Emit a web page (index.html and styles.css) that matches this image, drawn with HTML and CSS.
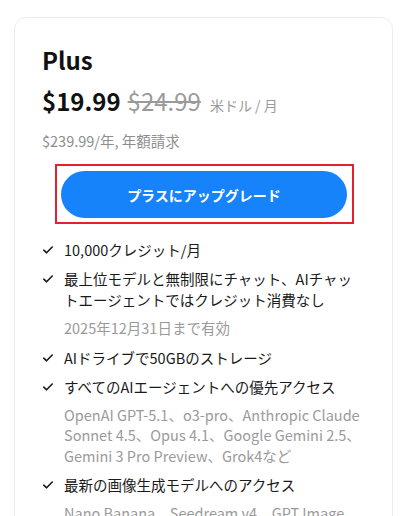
FILE: index.html
```html
<!DOCTYPE html>
<html lang="ja">
<head>
<meta charset="utf-8">
<title>Plus</title>
<link rel="stylesheet" href="styles.css">
</head>
<body>
<div class="card">
  <h2 class="plan">Plus</h2>
  <div class="price-row">
    <span class="price">$19.99</span>
    <span class="old-price">$24.99</span>
    <span class="unit">米ドル / 月</span>
  </div>
  <p class="annual">$239.99/年, 年額請求</p>
  <div class="btn-frame">
    <button class="btn">プラスにアップグレード</button>
  </div>
  <ul class="features">
    <li class="item"><svg class="check" viewBox="0 0 10 8"><path d="M0.8 4.2 L3.6 6.8 L9.2 1"/></svg><span>10,000クレジット/月</span></li>
    <li class="item"><svg class="check" viewBox="0 0 10 8"><path d="M0.8 4.2 L3.6 6.8 L9.2 1"/></svg><span>最上位モデルと無制限にチャット、AIチャットエージェントではクレジット消費なし</span></li>
    <li class="note">2025年12月31日まで有効</li>
    <li class="item"><svg class="check" viewBox="0 0 10 8"><path d="M0.8 4.2 L3.6 6.8 L9.2 1"/></svg><span>AIドライブで50GBのストレージ</span></li>
    <li class="item"><svg class="check" viewBox="0 0 10 8"><path d="M0.8 4.2 L3.6 6.8 L9.2 1"/></svg><span>すべてのAIエージェントへの優先アクセス</span></li>
    <li class="note">OpenAI GPT-5.1、o3-pro、Anthropic Claude Sonnet 4.5、Opus 4.1、Google Gemini 2.5、Gemini 3 Pro Preview、Grok4など</li>
    <li class="item"><svg class="check" viewBox="0 0 10 8"><path d="M0.8 4.2 L3.6 6.8 L9.2 1"/></svg><span>最新の画像生成モデルへのアクセス</span></li>
    <li class="note">Nano Banana、Seedream v4、GPT Image 1、FLUXなど</li>
  </ul>
</div>
</body>
</html>
```

FILE: styles.css
```css
html, body {
  margin: 0;
  padding: 0;
  background: #ffffff;
}
body {
  font-family: "Noto Sans CJK JP", "Noto Sans", sans-serif;
  color: #1a1a1a;
  overflow: hidden;
}
.card {
  box-sizing: border-box;
  width: 379px;
  margin: 17px 0 0 14px;
  border: 1px solid #ececec;
  border-radius: 12px;
  padding: 26px 27px 40px 27px;
  min-height: 600px;
}
.plan {
  margin: 0;
  font-size: 24px;
  font-weight: 700;
  line-height: 32px;
  color: #111;
}
.price-row {
  display: flex;
  align-items: baseline;
  gap: 7px;
  margin-top: 8px;
  line-height: 34px;
}
.price {
  font-size: 24px;
  font-weight: 700;
  color: #111;
}
.old-price {
  font-size: 24px;
  font-weight: 400;
  color: #9a9a9a;
  text-decoration: line-through;
  text-decoration-thickness: 1.5px;
}
.unit {
  font-size: 14px;
  color: #9a9a9a;
  margin-left: 2px;
}
.annual {
  margin: 9px 0 0 0;
  font-size: 14.5px;
  line-height: 20px;
  color: #8e8e8e;
}
.btn-frame {
  box-sizing: border-box;
  width: 299px;
  height: 60px;
  margin: 13px 0 0 13px;
  border: 2.5px solid #e3202b;
  padding: 5px 4px 3px 4px;
}
.btn {
  display: block;
  width: 286px;
  height: 47px;
  margin: 0;
  border: none;
  border-radius: 24px;
  background: #1783fb;
  color: #fff;
  font-family: "Noto Sans CJK JP", "Noto Sans", sans-serif;
  font-size: 14px;
  font-weight: 700;
}
.features {
  list-style: none;
  margin: 15px 0 0 0;
  padding: 0;
  display: flex;
  flex-direction: column;
  gap: 8px;
  font-size: 14.5px;
  line-height: 21px;
}
.item {
  display: grid;
  grid-template-columns: 22px 1fr;
  align-items: start;
  color: #1a1a1a;
}
.check {
  width: 10px;
  height: 8px;
  margin: 7px 0 0 1px;
  fill: none;
  stroke: #1a1a1a;
  stroke-width: 1.6;
  stroke-linecap: round;
  stroke-linejoin: round;
}
.note {
  padding-left: 22px;
  color: #9a9a9a;
  line-height: 20.5px;
  margin-top: 0;
}
```
